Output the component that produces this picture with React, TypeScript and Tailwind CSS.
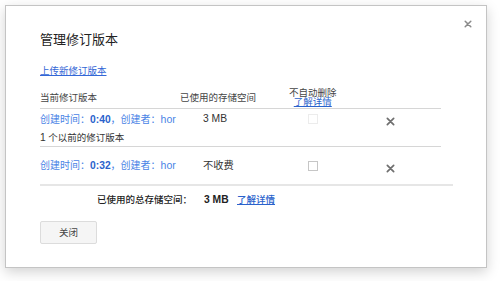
import { useState } from 'react';

type Revision = {
  time: string;
  author: string;
  size: string;
  keep: boolean;
  disabled: boolean;
};

const revisions: Revision[] = [
  { time: '0:40', author: 'hor', size: '3 MB', keep: false, disabled: true },
  { time: '0:32', author: 'hor', size: '不收费', keep: false, disabled: false },
];

function Cross({ className }: { className?: string }) {
  return (
    <svg viewBox="0 0 10 10" className={className}>
      <path d="M1.5 1.5 L8.5 8.5 M8.5 1.5 L1.5 8.5" stroke="currentColor" strokeWidth="1.9" strokeLinecap="round" />
    </svg>
  );
}

function Check({ checked, disabled }: { checked: boolean; disabled: boolean }) {
  return (
    <span
      className={`block w-[10px] h-[10px] border bg-white ${
        disabled ? 'border-[#ececec]' : 'border-[#c6c6c6]'
      } ${checked ? 'bg-[#4d90fe]' : ''}`}
    />
  );
}

function RevisionLine({ rev }: { rev: Revision }) {
  return (
    <div className="flex items-center h-full">
      <div className="w-[163px] text-[#4a84e6] whitespace-nowrap text-[10px]">
        创建时间：<span className="font-bold text-[#2a62cc] text-[10.3px]">{rev.time}</span>，创建者：
        <span className="text-[10.5px]">{rev.author}</span>
      </div>
      <div className="w-[86px] text-[#333] text-[10.3px]">{rev.size}</div>
      <div className="w-[48px] flex justify-center">
        <Check checked={rev.keep} disabled={rev.disabled} />
      </div>
      <div className="ml-[46px] w-[14px] flex justify-center pt-[5px]">
        <Cross className="w-[9px] h-[9px] text-[#6f6f6f]" />
      </div>
    </div>
  );
}

export default function App() {
  const [open] = useState(true);
  if (!open) return null;

  return (
    <div
      className="w-[500px] h-[281px] bg-white pt-[5px] pl-[5px]"
      style={{ fontFamily: '"Liberation Sans", "Noto Sans CJK SC", sans-serif' }}
    >
      <div className="relative w-[482px] h-[263px] border border-[#c4c4c4] bg-white shadow-[0_4px_12px_rgba(0,0,0,0.18)] pt-[26px] pl-[34px] text-[9.5px] leading-[12px] text-[#333]">
        <button className="absolute top-[14px] right-[14px] text-[#8a8a8a]">
          <Cross className="w-[8px] h-[8px]" />
        </button>

        <h1 className="text-[13px] leading-[16px] text-[#222]">管理修订版本</h1>

        <a className="block mt-[17px] text-[#3367d6] underline w-fit">上传新修订版本</a>

        <div className="w-[401px]">
          <div className="flex h-[32px] border-b border-[#d6d6d6] text-[#444]">
            <div className="w-[140px] pt-[15px]">当前修订版本</div>
            <div className="w-[109px] pt-[15px]">已使用的存储空间</div>
            <div className="pt-[10.5px] leading-[9.5px] flex flex-col items-center">
              <span>不自动删除</span>
              <a className="text-[#2a62cc] underline">了解详情</a>
            </div>
          </div>

          <div className="border-b border-[#d6d6d6] pb-[2px]">
            <div className="h-[20px]">
              <RevisionLine rev={revisions[0]} />
            </div>
            <div className="mt-[3px] text-[#333]">
              <span className="text-[10.3px]">1</span> 个以前的修订版本
            </div>
          </div>
        </div>

        <div className="w-[413px] h-[39px] border-b-2 border-[#e6e6e6]">
          <RevisionLine rev={revisions[1]} />
        </div>

        <div className="flex mt-[8px] pl-[57px] font-medium text-[#222]">
          <span className="w-[107px]">已使用的总存储空间：</span>
          <span className="w-[33px] font-bold text-[10.3px]">3 MB</span>
          <a className="text-[#2a62cc] underline">了解详情</a>
        </div>

        <button className="mt-[15px] w-[57px] h-[23px] bg-[#f5f5f5] border border-[#dcdcdc] rounded-[2px] text-[#444] text-[9.5px]">
          关闭
        </button>
      </div>
    </div>
  );
}
